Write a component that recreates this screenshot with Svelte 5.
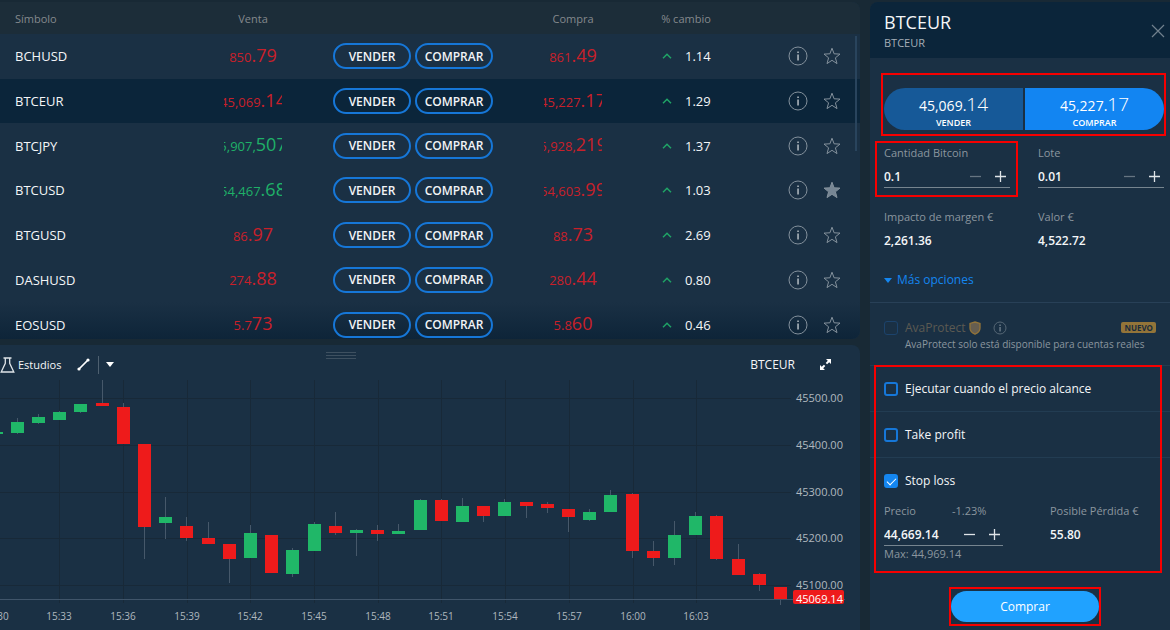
<script>
  let selected = 'BTCEUR'
  let amount = '0.1'
  let lots = '0.01'
  let stopPrice = '44,669.14'
  let atPrice = false
  let takeProfit = false
  let stopLoss = true

  let rows = [
    { symbol: 'BCHUSD', sell: ['850', '.79'], buy: ['861', '.49'], change: '1.14' },
    { symbol: 'BTCEUR', sell: ['45,069', '.14'], buy: ['45,227', '.17'], change: '1.29' },
    { symbol: 'BTCJPY', sell: ['5,907,', '507'], buy: ['5,928,', '219'], change: '1.37', up: true },
    { symbol: 'BTCUSD', sell: ['54,467', '.68'], buy: ['54,603', '.99'], change: '1.03', up: true, starred: true },
    { symbol: 'BTGUSD', sell: ['86', '.97'], buy: ['88', '.73'], change: '2.69' },
    { symbol: 'DASHUSD', sell: ['274', '.88'], buy: ['280', '.44'], change: '0.80' },
    { symbol: 'EOSUSD', sell: ['5.7', '73'], buy: ['5.8', '60'], change: '0.46' }
  ]

  // [body top, body bottom, high, low, rising]
  const candles = [
    [52, 54, 52, 54, 1], [42, 53, 38, 54, 1], [37, 43, 34, 44, 1], [32, 40, 31, 40, 1],
    [24, 32, 24, 33, 1], [23, 26, 0, 26, 0], [27, 64, 23, 64, 0], [64, 147, 64, 179, 0],
    [137, 143, 117, 159, 1], [146, 158, 137, 161, 0], [158, 164, 142, 164, 0], [164, 179, 164, 203, 0],
    [153, 178, 145, 178, 1], [155, 193, 155, 193, 0], [170, 194, 168, 197, 1], [144, 171, 142, 171, 1],
    [146, 153, 132, 155, 0], [150, 153, 149, 176, 1], [150, 154, 145, 161, 0], [151, 154, 144, 154, 1],
    [120, 150, 119, 150, 1], [120, 141, 119, 141, 0], [126, 142, 118, 142, 1], [126, 136, 126, 142, 0],
    [122, 136, 119, 136, 1], [122, 126, 122, 138, 0], [124, 128, 122, 133, 0], [129, 137, 129, 152, 0],
    [132, 140, 129, 141, 1], [115, 132, 110, 132, 1], [114, 171, 113, 178, 0], [171, 178, 161, 186, 0],
    [155, 178, 141, 185, 1], [136, 155, 132, 155, 1], [136, 179, 135, 180, 0], [179, 195, 164, 195, 0],
    [194, 205, 193, 211, 0], [207, 220, 207, 225, 0]
  ]
  const candleX = i => Math.floor(-4 + i * 21.2)

  const times = ['15:30', '15:33', '15:36', '15:39', '15:42', '15:45', '15:48', '15:51', '15:54', '15:57', '16:00', '16:03']
  const timeX = i => Math.floor(-4 + i * 63.7)

  const levels = ['45500.00', '45400.00', '45300.00', '45200.00', '45100.00']
  const levelY = i => Math.round(18 + i * 46.8)

  function toggleStar(row) {
    row.starred = !row.starred
    rows = rows
  }

  function step(value, by) {
    const digits = (value.split('.')[1] || '').length
    const next = Math.max(0, Number(value.replace(/,/g, '')) + by)
    return next.toLocaleString('en-US', { minimumFractionDigits: digits, maximumFractionDigits: digits })
  }
</script>

<div class="page">
  <main>
    <section class="quotes">
      <table>
        <thead>
          <tr>
            <th class="symbol">Símbolo</th>
            <th class="price-col">Venta</th>
            <th class="trade-col"></th>
            <th class="price-col">Compra</th>
            <th class="change-col">% cambio</th>
            <th class="tools-col"></th>
          </tr>
        </thead>
        <tbody>
          {#each rows as row}
            <tr class:selected={row.symbol === selected}>
              <td class="symbol">{row.symbol}</td>
              <td><div class="price" class:up={row.up}><span>{row.sell[0]}</span><b>{row.sell[1]}</b></div></td>
              <td>
                <div class="trade">
                  <button on:click={() => (selected = row.symbol)}>VENDER</button>
                  <button on:click={() => (selected = row.symbol)}>COMPRAR</button>
                </div>
              </td>
              <td><div class="price"><span>{row.buy[0]}</span><b>{row.buy[1]}</b></div></td>
              <td>
                <div class="change">
                  <svg width="10" height="6" viewBox="0 0 10 6"><path d="M1 5.2L5 1.2L9 5.2" fill="none" stroke="#1fa366" stroke-width="1.5" /></svg>
                  {row.change}
                </div>
              </td>
              <td>
                <div class="tools">
                  <button aria-label="Información">
                    <svg width="20" height="20" viewBox="0 0 20 20">
                      <circle cx="10" cy="10" r="9" fill="none" stroke="#84919c" />
                      <path d="M9.2 5.4h1.7v1.7H9.2zM9.2 8.4h1.7v6.2H9.2z" fill="#a3adb5" />
                    </svg>
                  </button>
                  <button aria-label="Favorito" on:click={() => toggleStar(row)}>
                    <svg width="20" height="20" viewBox="0 0 20 20">
                      <path d="M10 2.2L12.1 7.8L18 8.1L13.4 11.8L15 17.6L10 14.3L5 17.6L6.6 11.8L2 8.1L7.9 7.8Z" fill={row.starred ? '#778694' : 'none'} stroke="#84919c" />
                    </svg>
                  </button>
                </div>
              </td>
            </tr>
          {/each}
        </tbody>
      </table>
      <div class="scrollbar"></div>
    </section>

    <section class="chart">
      <div class="handle"></div>
      <div class="toolbar">
        <button class="studies">
          <svg width="15" height="16" viewBox="0 0 15 16"><path d="M3.5 1h8M5.3 1v5.4L1.2 15h12.6L9.7 6.4V1" fill="none" stroke="#dfe4e8" stroke-width="1.3" /></svg>
          Estudios
        </button>
        <button class="draw" aria-label="Dibujar">
          <svg width="13" height="13" viewBox="0 0 13 13">
            <path d="M2 11L11 2" stroke="#fff" stroke-width="1.7" />
            <circle cx="2" cy="11" r="1.6" fill="#fff" /><circle cx="11" cy="2" r="1.6" fill="#fff" />
          </svg>
        </button>
        <button class="more" aria-label="Más herramientas">
          <svg width="8" height="5" viewBox="0 0 8 5"><path d="M0 0h8L4 5z" fill="#fff" /></svg>
        </button>
        <span class="chart-symbol">BTCEUR</span>
        <button class="expand" aria-label="Ampliar">
          <svg width="13" height="13" viewBox="0 0 13 13">
            <path d="M7 1h5v5zM1 7v5h5z" fill="#fff" />
            <path d="M10 3L7.4 5.6M5.6 7.4L3 10" stroke="#fff" stroke-width="2" />
          </svg>
        </button>
      </div>
      <svg class="plot" viewBox="0 0 860 250">
        {#each times as time, i}
          <line x1={timeX(i) + 0.5} x2={timeX(i) + 0.5} y1="0" y2="223" class="grid" />
          <text x={timeX(i)} y="240" class="time">{time}</text>
        {/each}
        {#each levels as level, i}
          <line x1="0" x2="791" y1={levelY(i) + 0.5} y2={levelY(i) + 0.5} class="grid" />
          <text x="796" y={levelY(i) + 4} class="level">{level}</text>
        {/each}
        {#each candles as [top, bottom, high, low, rising], i}
          <line x1={candleX(i) + 0.5} x2={candleX(i) + 0.5} y1={high} y2={low} class="wick" />
          <rect x={candleX(i) - 6} y={top} width="13" height={bottom - top} fill={rising ? '#20b768' : '#ee1b1b'} />
        {/each}
        <line x1="0" x2="845" y1="219.5" y2="219.5" class="last" />
        <rect x="793" y="210" width="51" height="14" rx="2" fill="#ee1b1b" />
        <text x="796" y="223" class="level now">45069.14</text>
      </svg>
    </section>
  </main>

  <aside>
    <header>
      <div>
        <h1>BTCEUR</h1>
        <p>BTCEUR</p>
      </div>
      <button class="close" aria-label="Cerrar">
        <svg width="14" height="14" viewBox="0 0 14 14"><path d="M1 1l12 12M13 1L1 13" stroke="#71818d" stroke-width="1.2" /></svg>
      </button>
    </header>

    <div class="order">
      <div class="sides marked">
        <button class="sell"><span>45,069.<b>14</b></span><small>VENDER</small></button>
        <button class="buy"><span>45,227.<b>17</b></span><small>COMPRAR</small></button>
      </div>

      <div class="fields">
        <div class="marked quantity">
          <label for="amount">Cantidad Bitcoin</label>
          <div class="stepper">
            <input id="amount" bind:value={amount} />
            <button class="dim" aria-label="Menos" on:click={() => (amount = step(amount, -0.1))}><svg width="13" height="13" viewBox="0 0 13 13"><path d="M1 6.5h11" /></svg></button>
            <button aria-label="Más" on:click={() => (amount = step(amount, 0.1))}><svg width="13" height="13" viewBox="0 0 13 13"><path d="M1 6.5h11M6.5 1v11" /></svg></button>
          </div>
        </div>
        <div>
          <label for="lots">Lote</label>
          <div class="stepper">
            <input id="lots" bind:value={lots} />
            <button class="dim" aria-label="Menos" on:click={() => (lots = step(lots, -0.01))}><svg width="13" height="13" viewBox="0 0 13 13"><path d="M1 6.5h11" /></svg></button>
            <button aria-label="Más" on:click={() => (lots = step(lots, 0.01))}><svg width="13" height="13" viewBox="0 0 13 13"><path d="M1 6.5h11M6.5 1v11" /></svg></button>
          </div>
        </div>
        <div>
          <div class="caption">Impacto de margen €</div>
          <div class="value">2,261.36</div>
        </div>
        <div>
          <div class="caption">Valor €</div>
          <div class="value">4,522.72</div>
        </div>
      </div>

      <button class="options">
        <svg width="8" height="5" viewBox="0 0 8 5"><path d="M0 0h8L4 5z" fill="#1486f0" /></svg>
        Más opciones
      </button>
    </div>

    <div class="protect">
      <div class="protect-row">
        <label><input type="checkbox" disabled />AvaProtect</label>
        <svg class="shield" width="12" height="14" viewBox="0 0 12 14">
          <path d="M6 1L11 2.4V7C11 10 9 12 6 13.2C3 12 1 10 1 7V2.4Z" fill="#665e50" stroke="#937439" stroke-width="1.3" />
        </svg>
        <svg width="14" height="14" viewBox="0 0 14 14">
          <circle cx="7" cy="7" r="6" fill="none" stroke="#566775" />
          <path d="M6.4 3.6h1.3v1.3H6.4zM6.4 6h1.3v4.4H6.4z" fill="#748390" />
        </svg>
        <span class="badge">NUEVO</span>
      </div>
      <p>AvaProtect solo está disponible para cuentas reales</p>
    </div>

    <div class="conditions marked">
      <div class="condition">
        <label><input type="checkbox" bind:checked={atPrice} />Ejecutar cuando el precio alcance</label>
      </div>
      <div class="condition">
        <label><input type="checkbox" bind:checked={takeProfit} />Take profit</label>
      </div>
      <div class="condition">
        <label><input type="checkbox" bind:checked={stopLoss} />Stop loss</label>
      </div>
      <div class="stop">
        <div class="stop-price">
          <div class="stop-label"><label for="stop">Precio</label><span>-1.23%</span></div>
          <div class="stepper">
            <input id="stop" bind:value={stopPrice} />
            <button aria-label="Menos" on:click={() => (stopPrice = step(stopPrice, -1))}><svg width="13" height="13" viewBox="0 0 13 13"><path d="M1 6.5h11" /></svg></button>
            <button aria-label="Más" on:click={() => (stopPrice = step(stopPrice, 1))}><svg width="13" height="13" viewBox="0 0 13 13"><path d="M1 6.5h11M6.5 1v11" /></svg></button>
          </div>
          <div class="caption">Max: 44,969.14</div>
        </div>
        <div>
          <div class="caption">Posible Pérdida €</div>
          <div class="value">55.80</div>
        </div>
      </div>
    </div>

    <div class="submit marked">
      <button>Comprar</button>
    </div>
  </aside>
</div>

<style>
  :global(body) {
    background: #182935;
  }

  .page {
    display: flex;
    gap: 10px;
    min-height: 100vh;
    padding-top: 2px;
    box-sizing: border-box;
    font-family: "Open Sans", "Noto Sans", sans-serif;
    font-size: 12px;
    color: #f4f6f8;
  }

  .page * {
    box-sizing: border-box;
  }

  button {
    padding: 0;
    border: 0;
    background: none;
    color: inherit;
    font: inherit;
    cursor: pointer;
  }

  svg {
    display: block;
    flex: none;
  }

  h1, p {
    margin: 0;
  }

  main {
    flex: 1;
    min-width: 0;
    display: flex;
    flex-direction: column;
    gap: 6px;
  }

  .quotes {
    position: relative;
    height: 337px;
    overflow: hidden;
    background: #1a3044;
    border-radius: 0 8px 8px 0;
  }

  table {
    width: 100%;
    height: 345px;
    table-layout: fixed;
    border-collapse: collapse;
  }

  th, td {
    padding: 0;
  }

  th {
    height: 32px;
    background: #1c2d39;
    color: #84898d;
    font-size: 11px;
    font-weight: 400;
  }

  .symbol {
    padding-left: 15px;
    text-align: left;
  }

  td.symbol {
    font-size: 13px;
    font-weight: 500;
  }

  .price-col {
    width: 126px;
  }

  .trade-col {
    width: 194px;
  }

  .change-col {
    width: 100px;
  }

  .tools-col {
    width: 124px;
  }

  tr.selected {
    background: #0b253a;
  }

  tbody tr:last-child {
    background: linear-gradient(#1a3044, #0b2236);
  }

  .price {
    display: flex;
    justify-content: center;
    align-items: baseline;
    width: 58px;
    margin: 0 auto;
    overflow: hidden;
    color: #c8202a;
    font-size: 13px;
    line-height: 25px;
  }

  .price b {
    font-size: 18px;
    font-weight: 400;
  }

  .price.up {
    color: #1fb068;
  }

  .trade {
    display: flex;
    justify-content: center;
    gap: 4px;
  }

  .trade button {
    width: 78px;
    height: 26px;
    border: 2px solid #1677d8;
    border-radius: 13px;
    color: #f2f4f6;
    font-weight: 600;
  }

  .change {
    display: flex;
    align-items: center;
    gap: 13px;
    padding-left: 26px;
    font-size: 13px;
    font-weight: 500;
  }

  .tools {
    display: flex;
    justify-content: flex-end;
    gap: 14px;
    padding-right: 18px;
  }

  .scrollbar {
    position: absolute;
    top: 34px;
    right: 3px;
    width: 2px;
    height: 115px;
    background: #29445d;
  }

  .chart {
    position: relative;
    flex: 1;
    background: #1a3044;
    border-radius: 0 8px 0 0;
  }

  .handle {
    position: absolute;
    top: 7px;
    left: 326px;
    width: 30px;
    height: 8px;
    background: repeating-linear-gradient(#3e5060 0 1px, transparent 1px 3px);
  }

  .toolbar {
    display: flex;
    align-items: center;
    height: 35px;
    padding: 4px 28px 0 0;
  }

  .studies {
    display: flex;
    align-items: center;
    gap: 3px;
    font-size: 11px;
    font-weight: 500;
  }

  .draw {
    margin-left: 16px;
  }

  .more {
    display: flex;
    align-items: center;
    height: 18px;
    margin-left: 8px;
    padding-left: 7px;
    border-left: 1px solid #4e6070;
  }

  .chart-symbol {
    margin-left: auto;
  }

  .expand {
    margin-left: 24px;
  }

  .plot {
    width: 100%;
  }

  .grid {
    stroke: #182938;
    stroke-width: 1;
  }

  .wick {
    stroke: #46586a;
  }

  .last {
    stroke: #40556a;
  }

  .time {
    fill: #b0b8bf;
    font-size: 10px;
    text-anchor: middle;
  }

  .level {
    fill: #b0b8bf;
    font-size: 11px;
  }

  .now {
    fill: #fff;
  }

  aside {
    flex: none;
    width: 300px;
    background: #1a3044;
    border-radius: 8px 0 0 0;
  }

  header {
    display: flex;
    justify-content: space-between;
    align-items: center;
    height: 56px;
    padding: 2px 5px 0 14px;
    background: #0b253a;
    border-radius: 8px 0 0 0;
  }

  h1 {
    font-size: 18px;
    font-weight: 400;
    line-height: 24px;
  }

  header p {
    color: #a5afb7;
    font-size: 11px;
    line-height: 18px;
  }

  .marked {
    position: relative;
  }

  .marked::after {
    content: "";
    position: absolute;
    inset: -15px -2px -6px -3px;
    border: 2px solid #f60000;
    pointer-events: none;
  }

  .order {
    padding: 30px 6px 14px 14px;
  }

  .sides {
    display: flex;
    gap: 2px;
  }

  .sides button {
    flex: 1;
    display: flex;
    flex-direction: column;
    align-items: center;
    height: 42px;
    padding-top: 4px;
    color: #fff;
    font-size: 14px;
  }

  .sides span {
    line-height: 24px;
  }

  .sides b {
    font-size: 19px;
    font-weight: 300;
  }

  .sides small {
    font-size: 9px;
    font-weight: 600;
    line-height: 10px;
  }

  .sell {
    background: #165998;
    border-radius: 21px 0 0 21px;
  }

  .buy {
    background: #1285f2;
    border-radius: 0 21px 21px 0;
  }

  .fields {
    display: grid;
    grid-template-columns: 1fr 1fr;
    gap: 21px 28px;
    margin-top: 15px;
  }

  .quantity::after {
    inset: -4px -8px -9px -9px;
  }

  .fields label, .caption, .stop-label {
    display: block;
    color: #8b969f;
    font-size: 11px;
    line-height: 16px;
  }

  .stepper {
    display: flex;
    align-items: center;
    gap: 12px;
    height: 27px;
    padding: 4px 3px 0 0;
    border-bottom: 1px solid #76848f;
  }

  .stepper input {
    flex: 1;
    width: 0;
    padding: 0;
    border: 0;
    outline: none;
    background: none;
    color: #f4f6f8;
    font: 600 12px "Open Sans", sans-serif;
  }

  .stepper path {
    stroke: #dfe4e8;
    stroke-width: 1.3;
  }

  .stepper .dim path {
    stroke: #667582;
  }

  .value {
    margin-top: 7px;
    font-weight: 600;
    line-height: 18px;
  }

  .options {
    display: flex;
    align-items: center;
    gap: 5px;
    margin-top: 22px;
    color: #1486f0;
    font-size: 12px;
    line-height: 16px;
  }

  .protect {
    height: 63px;
    padding: 16px 14px 0 14px;
    border-top: 1px solid #284057;
    color: #8b969f;
  }

  .protect-row {
    display: flex;
    align-items: center;
    height: 17px;
  }

  .protect-row label, .condition label {
    display: flex;
    align-items: center;
    gap: 7px;
  }

  .protect-row label {
    color: #5c5a52;
  }

  .shield {
    margin: 0 12px 0 3px;
  }

  .badge {
    margin-left: auto;
    padding: 0 3px;
    border-radius: 2px;
    background: #937439;
    color: #1a2c3c;
    font-size: 8px;
    font-weight: 700;
    line-height: 11px;
  }

  .protect p {
    padding-left: 21px;
    font-size: 10px;
    line-height: 16px;
    white-space: nowrap;
  }

  input[type="checkbox"] {
    appearance: none;
    width: 14px;
    height: 14px;
    margin: 0;
    border: 2px solid #1677d8;
    border-radius: 3px;
  }

  input[type="checkbox"]:disabled {
    border: 1px solid #1c436c;
  }

  input[type="checkbox"]:checked {
    background: #1486f0;
    border-color: #1486f0;
  }

  input[type="checkbox"]:checked::before {
    content: "";
    display: block;
    width: 8px;
    height: 4px;
    margin: 2px 1px;
    border: solid #fff;
    border-width: 0 0 1px 1px;
    transform: rotate(-45deg);
  }

  .conditions::after {
    inset: 0 8px 0 4px;
  }

  .condition {
    display: flex;
    align-items: center;
    height: 46px;
    padding-left: 14px;
    border-top: 1px solid #223c52;
    font-weight: 500;
  }

  .stop {
    display: flex;
    gap: 47px;
    padding: 0 14px 11px;
  }

  .stop-price {
    width: 119px;
  }

  .stop-price .stepper {
    padding-right: 2px;
  }

  .stop-label {
    display: flex;
    gap: 36px;
  }

  .submit {
    width: 148px;
    margin: 18px auto 7px;
    left: 5px;
  }

  .submit::after {
    inset: -4px -2px -4px -2px;
  }

  .submit button {
    width: 100%;
    height: 31px;
    border-radius: 16px;
    background: #20a2ff;
    color: #fff;
  }
</style>
